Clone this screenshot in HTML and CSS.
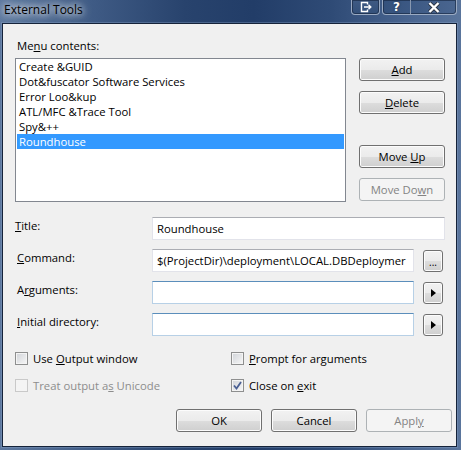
FILE: index.html
```html
<!DOCTYPE html>
<html>
<head>
<meta charset="utf-8">
<link rel="stylesheet" href="styles.css">
</head>
<body>
<div class="window">
  <div class="titlebar">
    <span class="title-text">External Tools</span>
    <div class="caption-buttons">
      <div class="cap-btn cap-pin">
        <svg width="12" height="12" viewBox="0 0 12 12"><path d="M7.5 3.5 V1.5 H1.5 V10.5 H7.5 V8.5" fill="none" stroke="#fff" stroke-width="1.4"/><path d="M4 6 H10.5 M8.5 3.8 L10.8 6 L8.5 8.2" fill="none" stroke="#fff" stroke-width="1.4"/></svg>
      </div>
      <div class="cap-group">
        <div class="cap-btn cap-help">?</div>
        <div class="cap-btn cap-close">
          <svg width="12" height="11" viewBox="0 0 12 11"><path d="M1.5 1 L10.5 10 M10.5 1 L1.5 10" stroke="#2a3240" stroke-width="4"/><path d="M1.5 1 L10.5 10 M10.5 1 L1.5 10" stroke="#fff" stroke-width="2.4"/></svg>
        </div>
      </div>
    </div>
  </div>
  <div class="client">
    <div class="menu-label">Me<u>n</u>u contents:</div>
    <div class="list-row">
      <div class="listbox">
        <div class="item">Create &amp;GUID</div>
        <div class="item">Dot&amp;fuscator Software Services</div>
        <div class="item">Error Loo&amp;kup</div>
        <div class="item">ATL/MFC &amp;Trace Tool</div>
        <div class="item">Spy&amp;++</div>
        <div class="item selected">Roundhouse</div>
      </div>
      <div class="side-buttons">
        <div class="btn"><span><u>A</u>dd</span></div>
        <div class="btn btn-gap"><span><u>D</u>elete</span></div>
        <div class="btn btn-big-gap"><span>Move <u>U</u>p</span></div>
        <div class="btn btn-gap disabled"><span>Move Do<u>w</u>n</span></div>
      </div>
    </div>
    <div class="form">
      <div class="form-row">
        <div class="label label-title"><u>T</u>itle:</div>
        <div class="field"><div class="textbox">Roundhouse</div></div>
      </div>
      <div class="form-row">
        <div class="label"><u>C</u>ommand:</div>
        <div class="field">
          <div class="textbox clip">$(ProjectDir)\deployment\LOCAL.DBDeploymer</div>
          <div class="small-btn dots">...</div>
        </div>
      </div>
      <div class="form-row">
        <div class="label">A<u>r</u>guments:</div>
        <div class="field">
          <div class="textbox blue"></div>
          <div class="small-btn"><span class="tri"></span></div>
        </div>
      </div>
      <div class="form-row">
        <div class="label"><u>I</u>nitial directory:</div>
        <div class="field">
          <div class="textbox blue"></div>
          <div class="small-btn"><span class="tri"></span></div>
        </div>
      </div>
    </div>
    <div class="checks">
      <div class="check-row">
        <div class="check"><span class="box"></span><span>Use <u>O</u>utput window</span></div>
        <div class="check"><span class="box"></span><span><u>P</u>rompt for arguments</span></div>
      </div>
      <div class="check-row second">
        <div class="check disabled"><span class="box"></span><span>Treat output a<u>s</u> Unicode</span></div>
        <div class="check"><span class="box checked"><svg width="9" height="9" viewBox="0 0 9 9"><path d="M1 4.5 L3.5 7.5 L8 1" fill="none" stroke="#4a5f93" stroke-width="1.8"/></svg></span><span>Close on <u>e</u>xit</span></div>
      </div>
    </div>
    <div class="actions">
      <div class="btn"><span>OK</span></div>
      <div class="btn"><span>Cancel</span></div>
      <div class="btn disabled"><span>Appl<u>y</u></span></div>
    </div>
  </div>
</div>
</body>
</html>
```
FILE: styles.css
```css
html, body {
  margin: 0;
  padding: 0;
  overflow: hidden;
}
body {
  width: 461px;
  height: 450px;
  font-family: "Open Sans", "Noto Sans", sans-serif;
  font-size: 11.3px;
  color: #000;
}
.window {
  width: 461px;
  height: 450px;
  box-sizing: border-box;
  display: flex;
  flex-direction: column;
  background:
    linear-gradient(to right, #5d789f 0%, #3f5b85 20%, #28436d 40%, #223d68 55%, #2f4b76 72%, #4b6792 90%, #5a759c 100%);
}
.titlebar {
  height: 23px;
  display: flex;
  align-items: flex-start;
  flex-shrink: 0;
}
.title-text {
  margin-left: 4px;
  margin-top: 2px;
  line-height: 16px;
  font-size: 12px;
  color: #000;
  text-shadow: 0 0 6px rgba(255,255,255,0.9), 0 0 10px rgba(255,255,255,0.8), 0 0 14px rgba(255,255,255,0.6);
}
.caption-buttons {
  margin-left: auto;
  margin-right: 4px;
  display: flex;
  gap: 2px;
}
.cap-btn {
  height: 15px;
  box-sizing: border-box;
  display: flex;
  align-items: center;
  justify-content: center;
  color: #fff;
}
.cap-pin {
  width: 29px;
  border: 1px solid #9aaac2;
  border-top: none;
  border-radius: 0 0 4px 4px;
  box-shadow: inset 0 0 0 1px rgba(20,35,60,0.6);
  background: linear-gradient(#3f5a83, #33507a);
}
.cap-group {
  display: flex;
  border: 1px solid #9aaac2;
  border-top: none;
  border-radius: 0 0 4px 4px;
  box-shadow: inset 0 0 0 1px rgba(20,35,60,0.6);
  background: linear-gradient(to right, #34517c, #4a6690);
  overflow: hidden;
}
.cap-group .cap-btn {
  height: 14px;
}
.cap-help {
  width: 28px;
  border-right: 1px solid #8898b0;
  font-family: "DejaVu Sans", sans-serif;
  font-weight: bold;
  font-size: 12px;
  line-height: 14px;
  text-shadow: 0 0 2px #1a2435;
}
.cap-close {
  width: 45px;
}
.client {
  flex: 1;
  margin: 0 4px 3px 2px;
  border: 1px solid #15233a;
  background: #f0f0f0;
  padding: 14px 0 0 12px;
  display: flex;
  flex-direction: column;
  box-shadow: 0 0 0 1px rgba(140,165,200,0.35);
}
.menu-label {
  padding-left: 2px;
  line-height: 15px;
  height: 15px;
}
.list-row {
  margin-top: 5px;
  display: flex;
  gap: 13px;
  align-items: flex-start;
}
.listbox {
  width: 331px;
  height: 144px;
  box-sizing: border-box;
  border: 1px solid #828790;
  background: #fff;
  padding: 0 1px;
}
.item {
  height: 15px;
  line-height: 15px;
  padding-left: 2px;
  white-space: nowrap;
}
.item.selected {
  background: #3399ff;
  color: #fff;
}
.side-buttons {
  display: flex;
  flex-direction: column;
  width: 86px;
}
.btn {
  width: 86px;
  height: 23px;
  box-sizing: border-box;
  border: 1px solid #707070;
  border-radius: 3px;
  background: linear-gradient(#f2f2f2 0%, #ebebeb 50%, #dddddd 51%, #cfcfcf 100%);
  box-shadow: inset 0 0 0 1px #fcfcfc;
  display: flex;
  align-items: center;
  justify-content: center;
  line-height: 15px;
  white-space: nowrap;
}
.btn.disabled {
  border-color: #adb2b5;
  background: #f4f4f4;
  color: #838383;
  box-shadow: none;
}
.btn-gap {
  margin-top: 10px;
}
.btn-big-gap {
  margin-top: 31px;
}
.form {
  margin-top: 15px;
  display: flex;
  flex-direction: column;
  gap: 9px;
}
.form-row {
  display: flex;
  align-items: center;
  height: 23px;
}
.label {
  width: 135px;
  padding-left: 2px;
  line-height: 15px;
  margin-top: -6px;
}
.label.label-title {
  padding-left: 0;
  width: 137px;
}
.field {
  width: 293px;
  display: flex;
  align-items: center;
  gap: 9px;
  padding-right: 2px;
  box-sizing: border-box;
}
.textbox {
  flex: 1;
  height: 23px;
  box-sizing: border-box;
  border: 1px solid #e2e3ea;
  border-top-color: #abadb3;
  background: #fff;
  line-height: 21px;
  padding-left: 4px;
  white-space: nowrap;
  overflow: hidden;
}
.form-row:first-child .field {
  padding-right: 0;
}
.textbox.blue {
  border-color: #b7d0e6;
  border-top-color: #5b8ebb;
}
.small-btn {
  width: 20px;
  height: 22px;
  box-sizing: border-box;
  border: 1px solid #707070;
  border-radius: 3px;
  background: linear-gradient(#f2f2f2 0%, #ebebeb 50%, #dddddd 51%, #cfcfcf 100%);
  box-shadow: inset 0 0 0 1px #fcfcfc;
  display: flex;
  align-items: center;
  justify-content: center;
  flex-shrink: 0;
}
.small-btn.dots {
  font-size: 10px;
  line-height: 10px;
  padding-top: 2px;
}
.tri {
  width: 0;
  height: 0;
  border-top: 4px solid transparent;
  border-bottom: 4px solid transparent;
  border-left: 5px solid #000;
  margin-left: 1px;
}
.checks {
  margin-top: 15px;
  display: flex;
  flex-direction: column;
}
.check-row {
  display: flex;
  height: 15px;
}
.check-row.second {
  margin-top: 12px;
}
.check {
  width: 216px;
  display: flex;
  align-items: center;
  line-height: 15px;
  white-space: nowrap;
}
.box {
  width: 13px;
  height: 13px;
  box-sizing: border-box;
  border: 1px solid #8e8f8f;
  background: linear-gradient(135deg, #d0d3d8, #f7f7f7);
  box-shadow: inset 0 0 0 1px #f4f4f4;
  margin-right: 5px;
  display: flex;
  align-items: center;
  justify-content: center;
  flex-shrink: 0;
}
.check.disabled {
  color: #8d8d8d;
}
.check.disabled .box {
  border-color: #c9c9c9;
  background: #f4f4f4;
  box-shadow: none;
}
.actions {
  margin-top: 16px;
  margin-left: 161px;
  display: flex;
  gap: 9px;
}
.actions .btn {
  width: 86px;
}
```
